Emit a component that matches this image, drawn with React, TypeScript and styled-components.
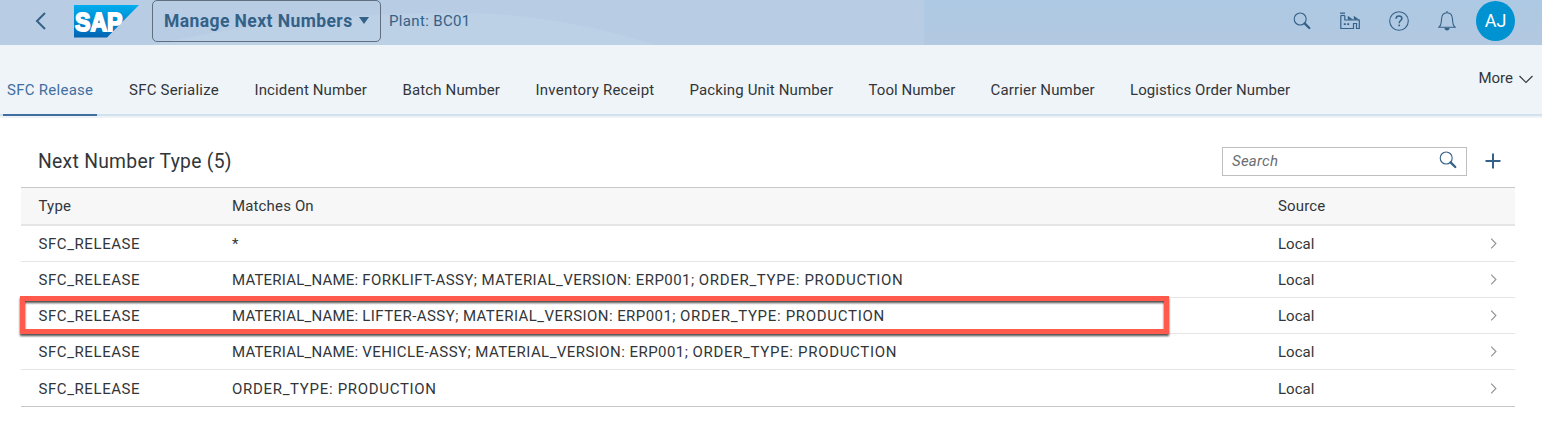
import React from "react";
import styled, { createGlobalStyle } from "styled-components";

const GlobalStyle = createGlobalStyle`
  * { box-sizing: border-box; }
  body {
    margin: 0;
    background: #fff;
    color: #32363a;
    font: 15px/20px Roboto, "Liberation Sans", sans-serif;
  }
`;

const Page = styled.div`
  width: 1542px;
  height: 439px;
  overflow: hidden;
`;

const ShellBar = styled.header`
  position: relative;
  display: flex;
  align-items: center;
  height: 45px;
  padding: 0 27px 4px 34px;
  background: linear-gradient(#adc9e3, #b3c8e1);
  color: #346187;
`;

const Backdrop = styled.svg`
  position: absolute;
  inset: 0;
`;

const BackIcon = styled.svg`
  position: relative;
  width: 14px;
  height: 20px;
`;

const Logo = styled.svg`
  position: relative;
  margin: 2px 0 0 26px;
`;

const AppTitle = styled.button`
  position: relative;
  display: flex;
  align-items: center;
  justify-content: space-between;
  width: 229px;
  height: 42px;
  margin: 1px 0 0 13px;
  padding: 0 11px 1px 11px;
  border: 1px solid #5f6f80;
  border-radius: 5px;
  background: transparent;
  color: #346187;
  font: bold 17.5px/22px Roboto, sans-serif;
  letter-spacing: 0.42px;
  white-space: nowrap;
`;

const Plant = styled.span`
  position: relative;
  margin-left: 8px;
  flex: 1;
  letter-spacing: 0.35px;
`;

const ShellActions = styled.div`
  position: relative;
  display: flex;
  align-items: center;
  gap: 29px;
`;

const Avatar = styled.span`
  display: flex;
  align-items: center;
  justify-content: center;
  width: 39px;
  height: 40px;
  margin: 1px 0 0 -9px;
  border-radius: 50%;
  background: #0092d1;
  color: #fff;
  font-size: 18px;
`;

const TabBar = styled.nav`
  display: flex;
  height: 73px;
  padding-left: 3px;
  background: linear-gradient(#eff4f9 69px, #d1e1ee 69px 71px, #f0f3f5 71px);
`;

const Tab = styled.a<{ $width: number; $spacing: number; $active?: boolean }>`
  width: ${(p) => p.$width}px;
  height: 71px;
  margin-right: 28px;
  padding: 35px 0 0 4px;
  border-bottom: 2px solid ${(p) => (p.$active ? "#3f6f9f" : "transparent")};
  color: ${(p) => (p.$active ? "#3f6f9f" : "#32363a")};
  letter-spacing: ${(p) => p.$spacing}px;
  white-space: nowrap;
`;

const More = styled.div`
  display: flex;
  gap: 6px;
  margin: 23px 9px 0 auto;
`;

const Content = styled.main`
  padding: 25px 27px 0 21px;
`;

const Toolbar = styled.div`
  display: flex;
  align-items: center;
  height: 44px;
  padding: 0 14px 8px 17px;
`;

const Title = styled.h2`
  flex: 1;
  margin: 0;
  padding-top: 1px;
  font-size: 19.3px;
  font-weight: 400;
  letter-spacing: 0.3px;
`;

const SearchField = styled.div`
  display: flex;
  align-items: center;
  justify-content: space-between;
  width: 245px;
  height: 29px;
  padding: 0 9px 2px 9px;
  border: 1px solid #bfbfbf;
  color: #6a6d70;
  font-style: italic;
  letter-spacing: 0.25px;
`;

const Placeholder = styled.span`
  padding-top: 1px;
`;

const AddIcon = styled.svg`
  margin-left: 18px;
`;

const Row = styled.div<{ $height?: number; $last?: boolean }>`
  position: relative;
  display: grid;
  grid-template-columns: 193.5px 1046px 1fr 25px;
  align-items: center;
  height: ${(p) => p.$height ?? 36}px;
  padding: 1px 0 0 17.5px;
  border-bottom: 1px solid ${(p) => (p.$last ? "#c8c8c8" : "#e5e5e5")};
  white-space: nowrap;
`;

const HeaderRow = styled(Row)`
  height: 39px;
  padding-top: 0;
  border-top: 1px solid #c8c8c8;
  border-bottom: 2px solid #e5e5e5;
  background: #f7f7f7;
`;

const Text = styled.span<{ $spacing?: number }>`
  letter-spacing: ${(p) => p.$spacing ?? 0}px;
`;

const Highlight = styled.div`
  position: absolute;
  top: -2px;
  left: -1px;
  z-index: 1;
  width: 1149px;
  height: 38px;
  border: 5px solid #ff5a4c;
  filter: drop-shadow(0 2px 1px rgba(0, 0, 0, 0.7));
`;

const SearchIcon = () => (
  <svg width="18" height="18" viewBox="0 0 18 18" fill="none" stroke="#346187">
    <circle cx="7.2" cy="7" r="6" strokeWidth="1.1" />
    <path d="M11.6 11.4 16.3 16" strokeWidth="2.3" strokeLinecap="round" />
  </svg>
);

const FactoryIcon = () => (
  <svg width="20" height="18" viewBox="0 0 20 18" fill="none" stroke="#346187" strokeWidth="1.2">
    <path d="M0 1.2H5M.8 3.5V16.5H13.5V11.5H16.5V16.5H19.3V8H4.8V3.5" />
    <path d="M.8 3.5H4.8" />
    <path d="M8 4.2V7.5H12.7L8 4.2ZM14 4.2V7.5H18.7L14 4.2Z" fill="#346187" strokeWidth=".4" />
    <path d="M3.8 12.2H5.8M7.2 12.2H9.2" strokeWidth="1.8" />
  </svg>
);

const HelpIcon = () => (
  <svg width="20" height="20" viewBox="0 0 20 20" fill="none" stroke="#346187" strokeWidth="1.1">
    <circle cx="10" cy="10" r="9.3" />
    <path d="M7.1 7.7C7.1 5.9 8.3 5 10 5S12.9 6 12.9 7.6C12.9 9.5 10.2 9.7 10.2 12.2" strokeWidth="1.5" />
    <path d="M10.2 13.6V15.2" strokeWidth="1.7" />
  </svg>
);

const BellIcon = () => (
  <svg width="18" height="20" viewBox="0 0 18 20" fill="none" stroke="#346187" strokeWidth="1.1">
    <path d="M9 0V1.8M.8 16.3C3.2 14.5 3.4 12.2 3.5 8.5 3.6 4.2 5.4 1.8 9 1.8S14.4 4.2 14.5 8.5C14.6 12.2 14.8 14.5 17.2 16.3Z" />
    <path d="M6.4 17H11.6C11.2 18.8 10.3 19.5 9 19.5S6.8 18.8 6.4 17Z" fill="#346187" stroke="none" />
  </svg>
);

const Chevron = () => (
  <svg width="8" height="12" viewBox="0 0 8 12" fill="none" stroke="#8f9296" strokeWidth="1.1">
    <path d="M1.2 .7 5.9 5.5 1.2 10.3" />
  </svg>
);

const tabs = [
  { label: "SFC Release", width: 94, spacing: 0.27 },
  { label: "SFC Serialize", width: 97.5, spacing: 0.22 },
  { label: "Incident Number", width: 120, spacing: 0.12 },
  { label: "Batch Number", width: 105, spacing: 0.14 },
  { label: "Inventory Receipt", width: 126, spacing: 0.23 },
  { label: "Packing Unit Number", width: 151, spacing: 0.14 },
  { label: "Tool Number", width: 94, spacing: 0.06 },
  { label: "Carrier Number", width: 111.5, spacing: 0.16 },
  { label: "Logistics Order Number", width: 168, spacing: 0.08 },
];

const rows = [
  { material: "" },
  { material: "FORKLIFT-ASSY", order: true },
  { material: "LIFTER-ASSY", order: true, marked: true },
  { material: "VEHICLE-ASSY", order: true },
  { material: "", order: true },
];

export default function App() {
  return (
    <Page>
      <GlobalStyle />
      <ShellBar>
        <Backdrop width="1542" height="45" viewBox="0 0 1542 45">
          <rect width="924" height="45" fill="#b8cde4" />
          <path d="M150 45C270 18 390 10 500 14 560 19 610 30 655 45Z" fill="#bcd0e6" />
        </Backdrop>
        <BackIcon viewBox="0 0 14 20" fill="none" stroke="#346187" strokeWidth="2">
          <path d="M11 2 3 10 11 18" />
        </BackIcon>
        <Logo width="65" height="33" viewBox="0 0 65 33">
          <defs>
            <linearGradient id="sapBlue" x1="0" y1="0" x2="0" y2="1">
              <stop offset="0" stopColor="#00aeef" />
              <stop offset="1" stopColor="#0264b3" />
            </linearGradient>
          </defs>
          <path d="M0 0H65L33 32.5H0Z" fill="url(#sapBlue)" />
          <text x="1" y="25.5" fill="#fff" stroke="#fff" strokeWidth="1.8" fontFamily="Liberation Sans, sans-serif" fontWeight="700" fontSize="25.5" textLength="47.5" lengthAdjust="spacingAndGlyphs">SAP</text>
        </Logo>
        <AppTitle>
          Manage Next Numbers
          <svg width="10" height="7" viewBox="0 0 10 7"><path d="M0 0H10L5 7Z" fill="#346187" /></svg>
        </AppTitle>
        <Plant>Plant: BC01</Plant>
        <ShellActions>
          <SearchIcon />
          <FactoryIcon />
          <HelpIcon />
          <BellIcon />
          <Avatar>AJ</Avatar>
        </ShellActions>
      </ShellBar>
      <TabBar>
        {tabs.map((t, i) => (
          <Tab key={t.label} $width={t.width} $spacing={t.spacing} $active={i === 0}>{t.label}</Tab>
        ))}
        <More>
          More
          <svg width="14" height="20" viewBox="0 0 14 20" fill="none" stroke="#32363a" strokeWidth="1.1"><path d="M.5 8 7 14.5 13.5 8" /></svg>
        </More>
      </TabBar>
      <Content>
        <Toolbar>
          <Title>Next Number Type (5)</Title>
          <SearchField>
            <Placeholder>Search</Placeholder>
            <SearchIcon />
          </SearchField>
          <AddIcon width="16" height="16" viewBox="0 0 16 16"><path d="M8 .5V15.5M.5 8H15.5" stroke="#346187" strokeWidth="2" /></AddIcon>
        </Toolbar>
        <HeaderRow>
          <Text $spacing={0.2}>Type</Text>
          <Text $spacing={0.15}>Matches On</Text>
          <Text $spacing={0.15}>Source</Text>
        </HeaderRow>
        {rows.map((r, i) => (
          <Row key={i} $height={i === 4 ? 37 : 36} $last={i === 4}>
            <Text $spacing={0.58}>SFC_RELEASE</Text>
            <span>
              {!r.order && "*"}
              {r.material && (
                <>
                  <Text $spacing={0.2}>{"MATERIAL_NAME: "}</Text>
                  <Text $spacing={0.44}>{`${r.material}; MATERIAL_VERSION: ERP001; `}</Text>
                </>
              )}
              {r.order && <Text $spacing={0.69}>ORDER_TYPE: PRODUCTION</Text>}
            </span>
            <Text>Local</Text>
            <Chevron />
            {r.marked && <Highlight />}
          </Row>
        ))}
      </Content>
    </Page>
  );
}
